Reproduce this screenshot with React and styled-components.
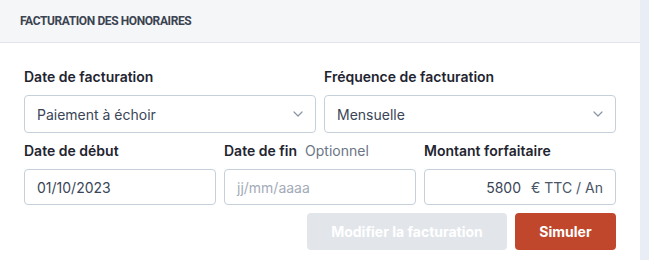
import React from "react";
import styled, { createGlobalStyle } from "styled-components";

const Global = createGlobalStyle`
  html, body { margin: 0; padding: 0; background: #e9edf5; }
  body { font-family: Inter, "Noto Sans", sans-serif; -webkit-font-smoothing: antialiased; }
  * { box-sizing: border-box; }
`;

const Page = styled.div`
  display: flex;
  width: 649px;
  height: 260px;
  background: #e9edf5;
`;

const Card = styled.section`
  width: 640px;
  height: 260px;
  background: #ffffff;
  display: flex;
  flex-direction: column;
`;

const Header = styled.header`
  height: 43px;
  background: #f5f6f8;
  border-bottom: 1px solid #e1e4ea;
  padding: 0 20px 1px;
  display: flex;
  align-items: center;
`;

const Title = styled.h2`
  margin: 0;
  font-family: Roboto, "Noto Sans", sans-serif;
  font-size: 12px;
  font-weight: 700;
  letter-spacing: -0.4px;
  color: #3b4351;
  text-transform: uppercase;
`;

const Body = styled.div`
  padding: 24px 24px 0;
  display: flex;
  flex-direction: column;
  gap: 8px;
`;

const Row = styled.div`
  display: grid;
  grid-template-columns: repeat(${(p) => p.$cols}, 1fr);
  gap: 8px;
`;

const Field = styled.div`
  display: flex;
  flex-direction: column;
  gap: 8px;
`;

const Label = styled.label`
  font-size: 14px;
  line-height: 20px;
  font-weight: 600;
  color: #1f2530;
  display: flex;
  gap: 8px;
`;

const Optional = styled.span`
  font-weight: 400;
  color: #6b7586;
`;

const Box = styled.div`
  height: ${(p) => p.$h}px;
  border: 1px solid #c6d0db;
  border-radius: 4px;
  background: #fff;
  display: flex;
  align-items: center;
  justify-content: ${(p) => (p.$right ? "flex-end" : "space-between")};
  padding: 0 12px;
  font-size: 14px;
  color: ${(p) => (p.$placeholder ? "#a3abb8" : "#3a4557")};
`;

const Chevron = () => (
  <svg width="10" height="6" viewBox="0 0 10 6" fill="none">
    <path d="M1 1l4 4 4-4" stroke="#8a94a6" strokeWidth="1.2" strokeLinecap="round" strokeLinejoin="round" />
  </svg>
);

const Suffix = styled.span`
  margin-left: 10px;
  color: #4a5567;
`;

const Actions = styled.div`
  display: flex;
  justify-content: flex-end;
  gap: 8px;
`;

const Button = styled.button`
  height: 37px;
  width: ${(p) => p.$w}px;
  border: none;
  border-radius: 4px;
  font-family: inherit;
  font-size: 14px;
  font-weight: 700;
  color: #fff;
  background: ${(p) => (p.$primary ? "#c0472b" : "#e2e6eb")};
  cursor: pointer;
`;

export default function App() {
  return (
    <>
      <Global />
      <Page>
        <Card>
          <Header>
            <Title>Facturation des honoraires</Title>
          </Header>
          <Body>
            <Row $cols={2}>
              <Field>
                <Label>Date de facturation</Label>
                <Box $h={38}>
                  <span>Paiement à échoir</span>
                  <Chevron />
                </Box>
              </Field>
              <Field>
                <Label>Fréquence de facturation</Label>
                <Box $h={38}>
                  <span>Mensuelle</span>
                  <Chevron />
                </Box>
              </Field>
            </Row>
            <Row $cols={3}>
              <Field>
                <Label>Date de début</Label>
                <Box $h={36}>01/10/2023</Box>
              </Field>
              <Field>
                <Label>
                  Date de fin <Optional>Optionnel</Optional>
                </Label>
                <Box $h={36} $placeholder>jj/mm/aaaa</Box>
              </Field>
              <Field>
                <Label>Montant forfaitaire</Label>
                <Box $h={36} $right>
                  <span>5800</span>
                  <Suffix>€ TTC / An</Suffix>
                </Box>
              </Field>
            </Row>
            <Actions>
              <Button $w={200}>Modifier la facturation</Button>
              <Button $w={101} $primary>Simuler</Button>
            </Actions>
          </Body>
        </Card>
      </Page>
    </>
  );
}
